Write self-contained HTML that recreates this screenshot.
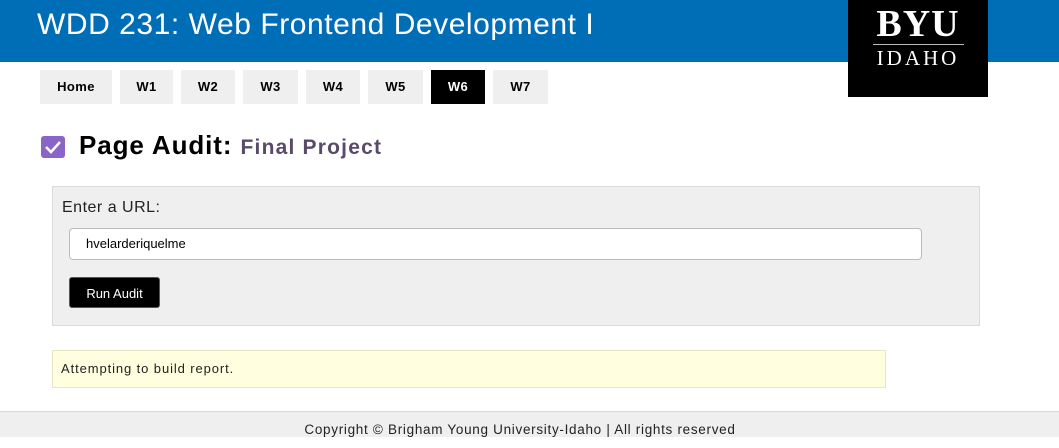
<!DOCTYPE html>
<html><head><style>
body{margin:0;width:1059px;height:437px;overflow:hidden;font-family:"Liberation Sans",sans-serif;background:#fff;position:relative}
.hdr{position:absolute;left:0;top:0;width:1059px;height:62px;background:#006eb6}
.hdr h1{margin:0;position:absolute;left:37px;top:8px;font-weight:normal;color:#fff;font-size:30px;letter-spacing:0.55px;white-space:nowrap}
.logo{position:absolute;left:848px;top:0;width:140px;height:97px;background:#000;color:#fff;text-align:center}
.logo .b{font-family:"Liberation Serif",serif;font-weight:bold;font-size:38px;position:absolute;left:0;right:0;top:6px;line-height:36px;letter-spacing:1px}
.logo .l{position:absolute;left:25px;width:91px;top:44px;height:1px;background:#bbb}
.logo .i{font-family:"Liberation Serif",serif;font-size:21px;position:absolute;left:0;right:0;top:46px;letter-spacing:3px}
.nav a{position:absolute;top:70px;height:34px;line-height:34px;background:#efefef;color:#000;font-weight:bold;font-size:13px;text-align:center;text-decoration:none;letter-spacing:0.4px}
.nav a.on{background:#000;color:#fff}
.cb{position:absolute;left:41px;top:136px;width:24px;height:22px;background:#8a64c8;border-radius:3px}
.t{position:absolute;left:79px;top:130px;font-size:26px;font-weight:bold;letter-spacing:0.9px;white-space:nowrap}
.t span{font-size:21px;color:#5a4a6a;letter-spacing:1.2px}
.form{position:absolute;left:52px;top:186px;width:926px;height:138px;background:#efefef;border:1px solid #dcdcdc}
.lab{position:absolute;left:9px;top:12px;font-size:16px;color:#222;letter-spacing:0.5px}
.inp{position:absolute;left:16px;top:41px;background:#fff;border:1px solid #bbb;border-radius:4px;font-size:13px;line-height:30px;padding-left:16px;box-sizing:border-box;width:853px;height:32px}
.btn{position:absolute;left:16px;top:90px;width:91px;height:31px;background:#000;color:#fff;border-radius:3px;font-size:13px;line-height:31px;text-align:center;border:1px solid #555;box-sizing:border-box}
.note{position:absolute;left:52px;top:350px;background:#ffffe0;border:1px solid #e6e6c6;font-size:13px;line-height:36px;padding-left:8px;box-sizing:border-box;width:834px;height:38px;color:#222;letter-spacing:0.9px}
.ft{position:absolute;left:0;top:411px;width:1059px;height:26px;background:#efefef;border-top:1px solid #d8d8d8;text-align:center;font-size:13.5px;line-height:36px;color:#222;letter-spacing:0.7px;white-space:nowrap;box-sizing:border-box;padding-right:19px}
</style></head><body>
<div class="hdr"><h1>WDD 231: Web Frontend Development I</h1></div>
<div class="logo"><div class="b">BYU</div><div class="l"></div><div class="i">IDAHO</div></div>
<div class="nav">
<a style="left:40px;width:72px">Home</a>
<a style="left:120px;width:53px">W1</a>
<a style="left:181px;width:54px">W2</a>
<a style="left:243px;width:55px">W3</a>
<a style="left:306px;width:54px">W4</a>
<a style="left:368px;width:55px">W5</a>
<a class="on" style="left:431px;width:54px">W6</a>
<a style="left:493px;width:55px">W7</a>
</div>
<div class="cb"><svg width="24" height="22" viewBox="0 0 24 22"><path d="M5 11 L10 16 L19 6" stroke="#fff" stroke-width="2.5" fill="none"/></svg></div>
<div class="t">Page Audit: <span>Final Project</span></div>
<div class="form"><div class="lab">Enter a URL:</div><div class="inp">hvelarderiquelme</div><div class="btn">Run Audit</div></div>
<div class="note">Attempting to build report.</div>
<div class="ft">Copyright © Brigham Young University-Idaho | All rights reserved</div>
</body></html>
